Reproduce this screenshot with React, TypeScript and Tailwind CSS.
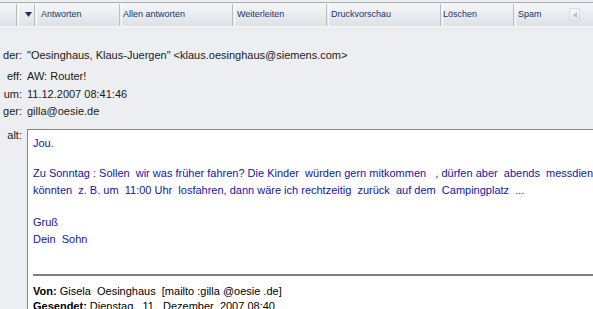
import React from "react";

const font = { fontFamily: '"Liberation Sans", Arial, sans-serif' };

function Sep() {
  return <div className="w-[2px] h-[22px] border-l border-[#b9bec6] bg-transparent shadow-[1px_0_0_#ffffff]" />;
}

function Item({ w, pl, label }: { w: number; pl: number; label: string }) {
  return (
    <div className="flex items-center h-full" style={{ width: w, paddingLeft: pl }}>
      <span className="text-[9px] text-[#17336d] whitespace-nowrap">{label}</span>
    </div>
  );
}

export default function App() {
  const rows: [string, string, string][] = [
    ["der:", '"Oesinghaus, Klaus-Juergen" <klaus.oesinghaus@siemens.com>', "h-[21px]"],
    ["eff:", "AW: Router!", "h-[20px]"],
    ["um:", "11.12.2007 08:41:46", "h-[17px]"],
    ["ger:", "gilla@oesie.de", "h-[16px]"],
  ];
  return (
    <div className="w-[593px] h-[309px] overflow-hidden bg-[#eceef1]" style={font}>
      {/* toolbar */}
      <div className="mt-[2px] h-[25px] border-t border-[#a7abb2] border-b border-b-[#f7f8fa] bg-gradient-to-b from-[#f6f7f9] to-[#dde1e6] flex items-center">
        <div className="w-[16px]" />
        <Sep />
        <div className="w-[16px] flex items-center justify-center pl-[4px]">
          <svg width="7" height="5" viewBox="0 0 7 5">
            <path d="M0 0 H7 L3.5 5 Z" fill="#17336d" />
          </svg>
        </div>
        <Sep />
        <Item w={83} pl={5} label="Antworten" />
        <Sep />
        <Item w={111} pl={2} label="Allen  antworten" />
        <Sep />
        <Item w={92} pl={3} label="Weiterleiten" />
        <Sep />
        <Item w={112} pl={3} label="Druckvorschau" />
        <Sep />
        <Item w={71} pl={1} label="Löschen" />
        <Sep />
        <Item w={54} pl={3} label="Spam" />
        <div className="w-[11px] h-[13px] bg-gradient-to-b from-[#f7f8fa] to-[#e3e6ea] border border-[#d8dce2] flex items-center justify-center">
          <svg width="4" height="6" viewBox="0 0 4 6">
            <path d="M4 0 V6 L0 3 Z" fill="#b8c0cc" />
          </svg>
        </div>
      </div>

      {/* header fields */}
      <div className="pt-[18px] flex flex-col text-[11px] text-[#1a1a1a]">
        {rows.map(([l, v, h]) => (
          <div key={l} className={`flex items-center ${h}`}>
            <div className="w-[22px] flex justify-end whitespace-nowrap">{l}</div>
            <div className="pl-[5px] whitespace-nowrap">{v}</div>
          </div>
        ))}
      </div>

      {/* body */}
      <div className="flex mt-[10px]">
        <div className="w-[27px] shrink-0 flex justify-end whitespace-nowrap text-[11px] leading-[13px] text-[#1a1a1a] pr-[5px] pt-[0px]">
          alt:
        </div>
        <div className="w-[700px] shrink-0 h-[200px] bg-white border-l border-t border-[#888888] pl-[5px] pt-[5px]">
          <div className="text-[11px] leading-[17px] text-[#1414a8] whitespace-nowrap">
            <div>Jou.</div>
            <div className="mt-[13px]">Zu Sonntag : Sollen&nbsp; wir was früher fahren? Die Kinder&nbsp; würden gern mitkommen&nbsp;&nbsp; , dürfen aber&nbsp; abends&nbsp; messdiener</div>
            <div>könnten&nbsp; z. B. um&nbsp; 11:00 Uhr&nbsp; losfahren, dann wäre ich rechtzeitig&nbsp; zurück&nbsp; auf dem&nbsp; Campingplatz&nbsp; ...</div>
            <div className="mt-[15px]">Gruß</div>
            <div>Dein&nbsp; Sohn</div>
          </div>
          <div className="mt-[26px] h-[2px] bg-[#7f7f7f]" />
          <div className="mt-[8px] text-[11px] leading-[15px] text-black whitespace-nowrap">
            <div><b>Von:</b> Gisela&nbsp; Oesinghaus&nbsp; [mailto :gilla @oesie .de]</div>
            <div><b>Gesendet:</b> Dienstag,&nbsp; 11.&nbsp; Dezember&nbsp; 2007 08:40</div>
          </div>
        </div>
      </div>
    </div>
  );
}
